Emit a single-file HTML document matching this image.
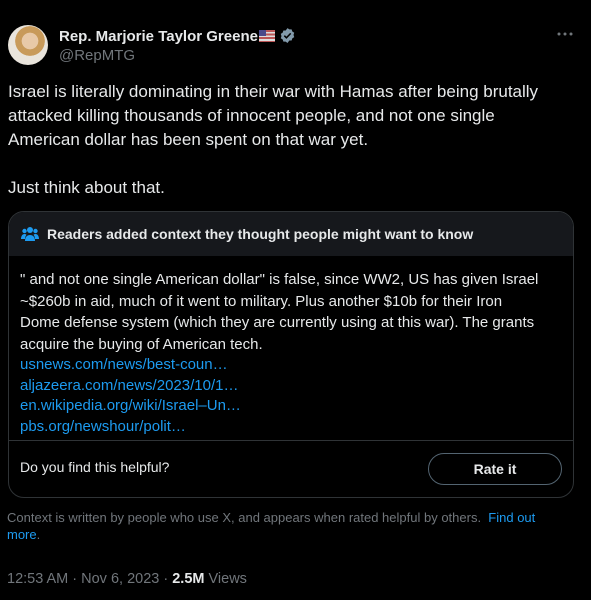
<!DOCTYPE html>
<html><head><meta charset="utf-8"><style>
*{margin:0;padding:0;box-sizing:border-box}
body{width:591px;height:600px;background:#000;color:#e7e9ea;font-family:"Liberation Sans",sans-serif;position:relative;overflow:hidden}
.a{position:absolute}
.av{left:8px;top:25px;width:40px;height:40px;border-radius:50%;background:radial-gradient(circle at 55% 40%,#e8c9a8 0 25%,#c89a5a 26% 45%,#e9e4dc 46%)}
.name{left:59px;top:27px;font-weight:bold;font-size:15px}
.handle{left:59px;top:47px;font-size:15px;color:#71767b}
.body{left:8px;top:80px;font-size:17px;line-height:24px;white-space:nowrap}
.card{left:8px;top:211px;width:566px;height:287px;border:1px solid #2f3336;border-radius:16px;overflow:hidden}
.hd{height:44px;background:#16181c;font-weight:bold;font-size:14px;padding:14px 0 0 38px;position:relative}
.note{padding:13px 0 0 11px;font-size:15px;line-height:21.5px;white-space:nowrap}
.note a{color:#1d9bf0;text-decoration:none;display:block;line-height:20.5px}
.sep{position:absolute;left:0;right:0;top:228px;border-top:1px solid #2f3336}
.q{position:absolute;left:11px;top:247px;font-size:14px}
.btn{position:absolute;left:419px;top:241px;width:134px;height:32px;border:1px solid #536471;border-radius:16px;font-weight:bold;font-size:14px;text-align:center;line-height:30px}
.ctx{left:7px;top:510px;width:560px;font-size:13px;color:#71767b;line-height:16.5px}
.ts{left:7px;top:571px;font-size:14.5px;color:#71767b}
</style></head><body>
<div class="a av"></div>
<div class="a name">Rep. Marjorie Taylor Greene<span style="display:inline-block;width:16px;height:12px;background:linear-gradient(#b55 0 15%,#ddd 15% 30%,#b55 30% 45%,#ddd 45% 60%,#b55 60% 75%,#ddd 75% 90%,#b55 90%);position:relative;margin-left:1px;vertical-align:-1px"><span style="position:absolute;left:0;top:0;width:7px;height:6px;background:#4a4a8a"></span></span><svg width="17" height="17" viewBox="0 0 24 24" style="vertical-align:-3px;margin-left:4px"><path fill="#829aab" d="M12 1.5l2.6 1.9 3.2-.1 1 3 2.7 1.8-1 3.1 1 3.1-2.7 1.8-1 3-3.2-.1L12 22.5l-2.6-1.9-3.2.1-1-3-2.7-1.8 1-3.1-1-3.1 2.7-1.8 1-3 3.2.1z"/><path d="M7.5 12.2l3 3 6-6.2" stroke="#000" stroke-width="2.2" fill="none"/></svg></div>
<div class="a handle">@RepMTG</div>
<svg class="a" style="left:557px;top:31px" width="16" height="6"><circle cx="2" cy="3" r="1.5" fill="#71767b"/><circle cx="8" cy="3" r="1.5" fill="#71767b"/><circle cx="14" cy="3" r="1.5" fill="#71767b"/></svg>
<div class="a body">Israel is literally dominating in their war with Hamas after being brutally<br>attacked killing thousands of innocent people, and not one single<br>American dollar has been spent on that war yet.<br><br>Just think about that.</div>
<div class="a card">
<div class="hd"><svg style="position:absolute;left:12px;top:14px" width="18" height="16" viewBox="0 0 18 16" fill="#1d9bf0"><circle cx="9" cy="4" r="3"/><circle cx="3.5" cy="5" r="2.2"/><circle cx="14.5" cy="5" r="2.2"/><path d="M4 15c0-4 2-6 5-6s5 2 5 6z"/><path d="M0 13c0-3 1.5-5 3.5-5 1 0 1.5.3 2 .8C4.5 10 4 11.5 4 13z"/><path d="M18 13c0-3-1.5-5-3.5-5-1 0-1.5.3-2 .8 1 1.2 1.5 2.7 1.5 4.2z"/></svg>Readers added context they thought people might want to know</div>
<div class="note">" and not one single American dollar" is false, since WW2, US has given Israel<br>~$260b in aid, much of it went to military. Plus another $10b for their Iron<br>Dome defense system (which they are currently using at this war). The grants<br>acquire the buying of American tech.
<a>usnews.com/news/best-coun…</a><a>aljazeera.com/news/2023/10/1…</a><a>en.wikipedia.org/wiki/Israel–Un…</a><a>pbs.org/newshour/polit…</a></div>
<div class="sep"></div>
<div class="q">Do you find this helpful?</div>
<div class="btn">Rate it</div>
</div>
<div class="a ctx">Context is written by people who use X, and appears when rated helpful by others.&nbsp; <span style="color:#1d9bf0">Find out more</span>.</div>
<div class="a ts">12:53 AM · Nov 6, 2023 · <b style="color:#e7e9ea">2.5M</b> Views</div>
</body></html>
